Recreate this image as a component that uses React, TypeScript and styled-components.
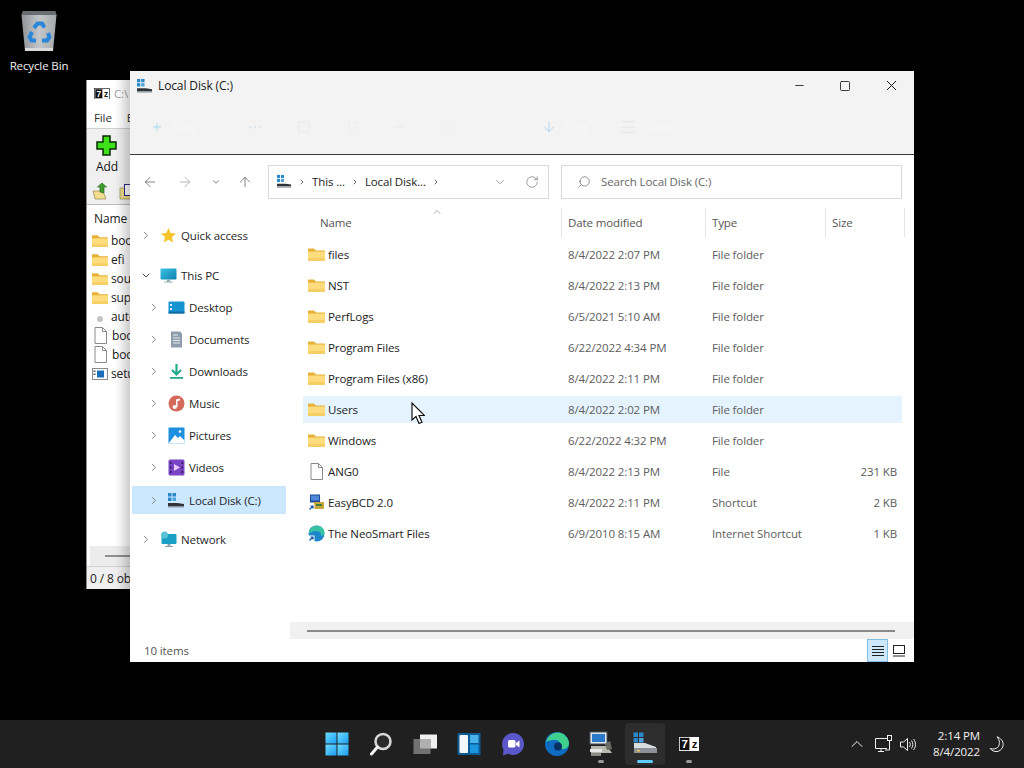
import React from 'react'
import styled, { createGlobalStyle } from 'styled-components'
import {
  AlignJustify,
  ArrowDown,
  ArrowLeft,
  ArrowRight,
  ArrowUp,
  ChevronDown,
  ChevronRight,
  ChevronUp,
  Minus,
  MoreHorizontal,
  Plus,
  RotateCw,
  Search,
  Square,
  X,
} from 'lucide-react'

const GlobalStyle = createGlobalStyle`
  html, body {
    margin: 0;
    padding: 0;
    background: #000;
    overflow: hidden;
  }
  * {
    box-sizing: border-box;
  }
`

const Screen = styled.div`
  width: 1024px;
  height: 768px;
  display: flex;
  flex-direction: column;
  font-family: 'Open Sans', 'Noto Sans', sans-serif;
  font-size: 11.5px;
  letter-spacing: -0.12px;
  color: #1b1b1b;
  overflow: hidden;
`

const Desktop = styled.div`
  position: relative;
  flex: 1;
  background: #000;
`

const RecycleBin = styled.div`
  position: absolute;
  left: 0;
  top: 9px;
  width: 78px;
  display: flex;
  flex-direction: column;
  align-items: center;
  gap: 5px;
  color: #f2f2f2;
  line-height: 15px;
`

/* 7-Zip window, mostly hidden behind explorer */
const ZipWindow = styled.div`
  position: absolute;
  left: 86px;
  top: 80px;
  width: 300px;
  height: 509px;
  display: flex;
  flex-direction: column;
  background: #fff;
  border-left: 1px solid #8a8a8a;
  overflow: hidden;
`

const ZipTitle = styled.div`
  height: 27px;
  display: flex;
  align-items: center;
  gap: 4px;
  padding-left: 7px;
  color: #a0a0a0;
`

const ZipMenu = styled.div`
  height: 22px;
  display: flex;
  align-items: center;
  gap: 15px;
  padding-left: 7px;
  color: #333;
  border-bottom: 1px solid #cfcfcf;
`

const ZipToolbar = styled.div`
  height: 50px;
  display: flex;
  flex-direction: column;
  align-items: flex-start;
  gap: 3px;
  padding: 6px 0 0 9px;
  background: #f0f0f0;
  color: #111;
  font-size: 12px;
  line-height: 15px;
`

const ZipPathBar = styled.div`
  height: 26px;
  display: flex;
  align-items: center;
  gap: 9px;
  padding-left: 5px;
  background: #f0f0f0;
  border-bottom: 1px solid #bdbdbd;
`

const ZipList = styled.div`
  flex: 1;
  display: flex;
  flex-direction: column;
  padding-left: 3px;
`

const ZipHeader = styled.div`
  height: 26px;
  padding: 5px 0 0 4px;
  color: #222;
  font-size: 12px;
`

const ZipRow = styled.div`
  height: 19px;
  display: flex;
  align-items: center;
  gap: 3px;
  padding-left: 2px;
  font-size: 12px;
  color: #222;
`

const ZipScroll = styled.div`
  height: 20px;
  margin-top: auto;
  display: flex;
  align-items: center;
  padding-left: 15px;
  background: #ececec;

  &::after {
    content: '';
    width: 100px;
    height: 2px;
    background: #8f8f8f;
  }
`

const ZipStatus = styled.div`
  height: 23px;
  display: flex;
  align-items: center;
  padding-left: 3px;
  background: #f0f0f0;
  border-top: 1px solid #d0d0d0;
  color: #222;
  font-size: 12px;
`

/* Explorer window */
const ExplorerWindow = styled.div`
  position: absolute;
  left: 130px;
  top: 71px;
  width: 784px;
  height: 591px;
  display: flex;
  flex-direction: column;
  background: #fff;
  box-shadow: -6px 0 10px rgba(0, 0, 0, 0.22);
`

const TitleBar = styled.div`
  height: 29px;
  display: flex;
  align-items: center;
  padding-left: 7px;
  gap: 5px;
  background: #f3f3f3;
  font-size: 12px;
  color: #1a1a1a;
`

const WindowButtons = styled.div`
  margin-left: auto;
  display: flex;
  align-items: center;
  color: #111;
`

const WindowButton = styled.div`
  width: 46px;
  height: 29px;
  display: flex;
  align-items: center;
  justify-content: center;
`

const CommandBar = styled.div`
  height: 55px;
  display: flex;
  align-items: center;
  padding: 0 0 0 21px;
  background: #f3f3f3;
  border-bottom: 1px solid #3a3a3a;
`

const CommandGroup = styled.div<{ $width: number }>`
  width: ${p => p.$width}px;
  display: flex;
  align-items: center;
  gap: 8px;
  color: #e4e4e4;
  font-size: 12px;
`

const CommandLabel = styled.span`
  color: #f8f8f8;
`

const NavRow = styled.div`
  height: 53px;
  display: flex;
  align-items: center;
  padding: 0 12px 0 10px;
  flex-shrink: 0;
`

const NavButton = styled.div<{ $dim?: boolean; $width?: number }>`
  width: ${p => p.$width ?? 35}px;
  display: flex;
  justify-content: center;
  color: ${p => (p.$dim ? '#a3a3a3' : '#666')};
`

const AddressBar = styled.div`
  width: 281px;
  height: 34px;
  display: flex;
  align-items: center;
  padding: 0 9px 0 8px;
  border: 1px solid #d9d9d9;
  color: #222;
  white-space: nowrap;
`

const Crumb = styled.span`
  margin: 0 6px;
`

const AddressEnd = styled.div`
  margin-left: auto;
  display: flex;
  align-items: center;
  gap: 18px;
  color: #777;
`

const SearchBox = styled.div`
  width: 341px;
  height: 34px;
  margin-left: 12px;
  display: flex;
  align-items: center;
  gap: 10px;
  padding-left: 15px;
  border: 1px solid #d9d9d9;
  color: #666;
`

const MirroredSearch = styled(Search)`
  transform: scaleX(-1);
`

const Body = styled.div`
  flex: 1;
  min-height: 0;
  display: flex;
`

const Sidebar = styled.nav`
  width: 160px;
  flex-shrink: 0;
  padding: 11px 0 0 2px;
  display: flex;
  flex-direction: column;
`

const TreeItem = styled.div<{ $depth: number; $active?: boolean; $gap?: number }>`
  width: 154px;
  height: ${p => (p.$active ? 28 : 32)}px;
  margin-top: ${p => p.$gap ?? 0}px;
  margin-bottom: ${p => (p.$active ? 2 : 0)}px;
  display: flex;
  align-items: center;
  padding-left: ${p => (p.$depth ? 16 : 8)}px;
  background: ${p => (p.$active ? '#cce8ff' : 'transparent')};
  border-radius: 1px;
  color: #1f1f1f;
  white-space: nowrap;
`

const TreeChevron = styled.span`
  width: 12px;
  display: flex;
  justify-content: center;
  color: #777;
  margin-right: 8px;
`

const TreeIcon = styled.span`
  width: 17px;
  height: 17px;
  display: flex;
  align-items: center;
  justify-content: center;
  margin-right: 4px;
`

const Main = styled.main`
  flex: 1;
  min-width: 0;
  display: flex;
  flex-direction: column;
  position: relative;
`

const SortArrow = styled.span`
  position: absolute;
  left: 141px;
  top: -2px;
  display: flex;
  color: #777;
`

const ColumnHeader = styled.div`
  height: 29px;
  flex-shrink: 0;
  margin: 0 9px 0 13px;
  display: grid;
  grid-template-columns: 259px 144px 120px 79px;
  align-items: stretch;
`

const HeaderCell = styled.div<{ $first?: boolean }>`
  display: flex;
  align-items: center;
  padding-left: ${p => (p.$first ? 17 : 6)}px;
  border-right: 1px solid #e5e5e5;
  color: #555;
`

const Rows = styled.div`
  flex: 1;
  padding: 4px 12px 0 13px;
  display: flex;
  flex-direction: column;
  gap: 4px;
`

const FileRow = styled.div<{ $hover?: boolean }>`
  height: 27px;
  flex-shrink: 0;
  display: grid;
  grid-template-columns: 259px 144px 120px 76px;
  align-items: center;
  background: ${p => (p.$hover ? '#e5f3ff' : 'transparent')};
`

const NameCell = styled.div`
  display: flex;
  align-items: center;
  gap: 3px;
  padding-left: 5px;
  color: #1b1b1b;
`

const FileIcon = styled.span`
  width: 17px;
  height: 17px;
  display: flex;
  align-items: center;
  justify-content: center;
`

const MetaCell = styled.div<{ $right?: boolean }>`
  padding: 0 5px 0 6px;
  color: #5d5d5d;
  text-align: ${p => (p.$right ? 'right' : 'left')};
`

const HScroll = styled.div`
  height: 17px;
  flex-shrink: 0;
  display: flex;
  align-items: center;
  padding: 0 19px 0 17px;
  background: #f1f1f1;

  &::after {
    content: '';
    flex: 1;
    height: 2px;
    background: #8a8a8a;
  }
`

const StatusBar = styled.div`
  height: 23px;
  flex-shrink: 0;
  display: flex;
  align-items: center;
  justify-content: space-between;
  padding: 0 5px 0 14px;
  color: #555;
`

const ViewButtons = styled.div`
  display: flex;
  align-items: center;
`

const ViewButton = styled.div<{ $active?: boolean }>`
  width: 21px;
  height: 23px;
  display: flex;
  align-items: center;
  justify-content: center;
  border: 1px solid ${p => (p.$active ? '#7fbde6' : 'transparent')};
  background: ${p => (p.$active ? '#cde8fb' : 'transparent')};
`

const Cursor = styled.svg`
  position: absolute;
  left: 411px;
  top: 402px;
`

/* Taskbar */
const Taskbar = styled.footer`
  height: 48px;
  flex-shrink: 0;
  display: grid;
  grid-template-columns: 1fr auto 1fr;
  background: #202020;
  padding-left: 2px;
`

const TaskIcons = styled.div`
  grid-column: 2;
  display: flex;
  align-items: stretch;
`

const TaskButton = styled.div<{ $active?: boolean; $mark?: 'dot' | 'bar' }>`
  position: relative;
  width: 44px;
  display: flex;
  align-items: center;
  justify-content: center;

  &::before {
    content: '';
    position: absolute;
    left: 2px;
    right: 2px;
    top: 3px;
    bottom: 3px;
    border-radius: 4px;
    background: ${p => (p.$active ? '#2d2d2d' : 'transparent')};
  }

  &::after {
    content: '';
    position: absolute;
    bottom: 5px;
    left: 50%;
    transform: translateX(-50%);
    width: ${p => (p.$mark === 'bar' ? 16 : p.$mark === 'dot' ? 6 : 0)}px;
    height: 3px;
    border-radius: 2px;
    background: ${p => (p.$mark === 'bar' ? '#60cdff' : '#9a9a9a')};
  }

  & > svg {
    position: relative;
    z-index: 1;
  }
`

const Tray = styled.div`
  grid-column: 3;
  display: flex;
  align-items: center;
  justify-content: flex-end;
  color: #f0f0f0;
`

const TrayIcon = styled.span<{ $width?: number }>`
  width: ${p => p.$width ?? 25}px;
  display: flex;
  justify-content: center;
`

const Clock = styled.div`
  margin-left: 12px;
  text-align: right;
  font-size: 11.5px;
  line-height: 16px;
`

const MoonSlot = styled.span`
  width: 44px;
  padding-left: 9px;
  display: flex;
  justify-content: flex-start;
`

const FolderIcon = ({ size = 17 }: { size?: number }) => (
  <svg width={size} height={size} viewBox="0 0 17 17">
    <path d="M0 3.5C0 3 .4 2.5 1 2.5h5l2 2h8c.6 0 1 .4 1 1V8H0z" fill="#e6b134" />
    <rect x="0" y="5.5" width="17" height="9.5" rx="1" fill="#fcdc7c" />
    <rect x="0" y="12" width="17" height="3" rx="1" fill="#f5cf63" />
  </svg>
)

const UpFolderIcon = () => (
  <svg width="18" height="18" viewBox="0 0 18 18">
    <path d="M1 8h10l3 8H3z" fill="#f0dc8c" stroke="#9c9258" strokeWidth=".8" />
    <path d="M8 9V4H5.500L10 0l4.500 4H12v6z" fill="#3e9e2e" stroke="#1d5c14" strokeWidth=".6" />
  </svg>
)

const CopyFolderIcon = () => (
  <svg width="18" height="18" viewBox="0 0 18 18">
    <path d="M1 5h11v11H1z" fill="#f0dc8c" stroke="#9c9258" strokeWidth=".8" />
    <rect x="5.500" y="1.500" width="12" height="11" fill="#fff" stroke="#2a2a80" />
  </svg>
)

const DocIcon = () => (
  <svg width="17" height="17" viewBox="0 0 17 17">
    <path d="M3 .5h7.500l4 4v12H3z" fill="#fff" stroke="#8a8a8a" />
    <path d="M10.500.5v4h4" fill="none" stroke="#8a8a8a" />
  </svg>
)

const DriveIcon = ({ size = 17 }: { size?: number }) => (
  <svg width={size} height={size} viewBox="0 0 17 17">
    <rect x="0" y="1" width="3.500" height="3.500" fill="#2a87c9" />
    <rect x="4.500" y="1" width="3.500" height="3.500" fill="#2a87c9" />
    <rect x="0" y="5.500" width="3.500" height="3.500" fill="#2a87c9" />
    <rect x="4.500" y="5.500" width="3.500" height="3.500" fill="#4aa3dd" />
    <path d="M0 11h9.500l6.500 1v2H0z" fill="#2f3338" />
    <rect x="0" y="14" width="16" height="1.500" fill="#8d97a0" />
  </svg>
)

const MonitorIcon = () => (
  <svg width="17" height="17" viewBox="0 0 17 17">
    <defs>
      <linearGradient id="screenGrad" x1="0" y1="0" x2="1" y2="1">
        <stop offset="0" stopColor="#3cc3e3" />
        <stop offset="1" stopColor="#0c7fb0" />
      </linearGradient>
    </defs>
    <rect x=".5" y="1.500" width="16" height="11" rx="1" fill="url(#screenGrad)" />
    <rect x="7" y="12.500" width="3" height="2" fill="#8fa3ad" />
    <rect x="4.500" y="14.500" width="8" height="1" fill="#8fa3ad" />
  </svg>
)

const StarIcon = () => (
  <svg width="17" height="17" viewBox="0 0 17 17">
    <path
      d="M8.500 1l2.200 4.900 5.300.6-4 3.600 1.100 5.300-4.600-2.700-4.600 2.700 1.100-5.300-4-3.600 5.300-.6z"
      fill="#f7c52b"
    />
  </svg>
)

const DesktopFolderIcon = () => (
  <svg width="17" height="17" viewBox="0 0 17 17">
    <rect x=".5" y="2.500" width="16" height="12" rx="1" fill="#1793d1" />
    <rect x="2" y="5" width="2" height="2" fill="#d7f0ff" />
    <rect x="2" y="9" width="2" height="2" fill="#d7f0ff" />
    <rect x=".5" y="12.500" width="16" height="2" fill="#0e6ea3" />
  </svg>
)

const DocumentsIcon = () => (
  <svg width="17" height="17" viewBox="0 0 17 17">
    <path d="M3 .5h9l2 2v14H3z" fill="#8e9cae" />
    <rect x="5" y="3.500" width="5" height="1" fill="#e7ebef" />
    <rect x="5" y="6.500" width="7" height="1" fill="#e7ebef" />
    <rect x="5" y="9" width="7" height="1" fill="#e7ebef" />
    <rect x="5" y="11.500" width="7" height="1" fill="#e7ebef" />
  </svg>
)

const DownloadsIcon = () => (
  <svg width="17" height="17" viewBox="0 0 17 17">
    <path d="M8.500 1v10M4 7l4.500 4.500L13 7" fill="none" stroke="#23a98c" strokeWidth="2.200" />
    <rect x="2" y="14" width="13" height="1.800" fill="#23a98c" />
  </svg>
)

const MusicIcon = () => (
  <svg width="17" height="17" viewBox="0 0 17 17">
    <circle cx="8.500" cy="8.500" r="8" fill="#d46a5c" />
    <path d="M8 12V4.500l4-1v2l-2.500.6V12" fill="#fff" />
    <circle cx="6.700" cy="12" r="2.100" fill="#fff" />
  </svg>
)

const PicturesIcon = () => (
  <svg width="17" height="17" viewBox="0 0 17 17">
    <rect x=".5" y=".5" width="16" height="16" fill="#1c8fe0" />
    <path d="M.5 16.500l6.500-8.500 3 3 2-2 4.500 4.500v3z" fill="#fff" />
    <circle cx="12" cy="4.500" r="1.300" fill="#fff" />
  </svg>
)

const VideosIcon = () => (
  <svg width="17" height="17" viewBox="0 0 17 17">
    <rect x=".5" y=".5" width="16" height="16" rx="1.500" fill="#7a45c4" />
    <rect x="2" y="3" width="1.500" height="2" fill="#2d1b55" />
    <rect x="2" y="7.500" width="1.500" height="2" fill="#2d1b55" />
    <rect x="2" y="12" width="1.500" height="2" fill="#2d1b55" />
    <rect x="13.500" y="3" width="1.500" height="2" fill="#2d1b55" />
    <rect x="13.500" y="7.500" width="1.500" height="2" fill="#2d1b55" />
    <rect x="13.500" y="12" width="1.500" height="2" fill="#2d1b55" />
    <path d="M6 5l6 3.500L6 12z" fill="#e9c9ff" />
  </svg>
)

const NetworkIcon = () => (
  <svg width="17" height="17" viewBox="0 0 17 17">
    <rect x="1.500" y="3" width="15" height="10" rx="1" fill="#1a9fc4" />
    <rect x="7.500" y="13" width="3" height="2" fill="#8fa3ad" />
    <rect x="5" y="15" width="8" height="1" fill="#8fa3ad" />
    <circle cx="4.500" cy="4" r="3.500" fill="#5cc2d8" />
  </svg>
)

const ShortcutBadge = () => (
  <>
    <rect x="0" y="10.500" width="6.500" height="6.500" fill="#fff" />
    <path d="M1.500 15.500l3-3M2.500 12H5v2.500" fill="none" stroke="#1558a8" strokeWidth="1.200" />
  </>
)

const EasyBcdIcon = () => (
  <svg width="17" height="17" viewBox="0 0 17 17">
    <rect x="2" y=".5" width="10" height="8" fill="#20499c" />
    <rect x="3" y="1.500" width="8" height="5" fill="#4e8ad8" />
    <rect x="6" y="8" width="10" height="7" fill="#c9a53c" />
    <rect x="8" y="10" width="6" height="2" fill="#3f7f3a" />
    <ShortcutBadge />
  </svg>
)

const EdgeShortcutIcon = () => (
  <svg width="17" height="17" viewBox="0 0 17 17">
    <circle cx="8.500" cy="8.500" r="8" fill="#1c87c9" />
    <path d="M1 7c1-5 6-7 10-6s5.500 4.500 5.500 7c0 2-2 3-4 2.500C14 9 12 6 8.500 6 5 6 2 7.500 1 9z" fill="#38c2a4" />
    <ShortcutBadge />
  </svg>
)

const RecycleBinIcon = () => (
  <svg width="38" height="44" viewBox="0 0 38 44">
    <defs>
      <linearGradient id="binGrad" x1="0" y1="0" x2="1" y2="0">
        <stop offset="0" stopColor="#8e9296" />
        <stop offset=".5" stopColor="#c4c7ca" />
        <stop offset="1" stopColor="#a5a8ab" />
      </linearGradient>
    </defs>
    <path d="M3 2h32l1.500 4L33 42H5L1.500 6z" fill="url(#binGrad)" />
    <path d="M3 2h32l1.500 4h-35z" fill="#6a6d70" />
    <rect x="5" y="39" width="28" height="3" fill="#d8dadb" />
    <g fill="none" stroke="#2a86d8" strokeWidth="4">
      <path d="M14 19l3.500-4.500h4.500l2.500 4" />
      <path d="M28 24l1.500 4-2.500 3.500h-5" />
      <path d="M16 31.500h-4.500l-2-3.500 2.500-5" />
    </g>
  </svg>
)

const ZipLogo = ({ size = 16 }: { size?: number }) => (
  <svg width={size} height={size * 0.72} viewBox="0 0 25 18">
    <rect x=".5" y=".5" width="24" height="17" fill="#fff" stroke="#111" />
    <rect x="2" y="2" width="11" height="14" fill="#111" />
    <text x="7.500" y="13.500" fontSize="13" fontWeight="700" fill="#fff" textAnchor="middle" fontFamily="Liberation Sans, sans-serif">
      7
    </text>
    <text x="18.700" y="13.500" fontSize="13" fontWeight="700" fill="#111" textAnchor="middle" fontFamily="Liberation Sans, sans-serif">
      z
    </text>
  </svg>
)

const AddIcon = () => (
  <svg width="21" height="21" viewBox="0 0 21 21">
    <path d="M7 1h7v6h6v7h-6v6H7v-6H1V7h6z" fill="#3ee01a" stroke="#0a2a05" strokeWidth="1.500" />
  </svg>
)

const SmallZipFile = () => (
  <svg width="16" height="12" viewBox="0 0 16 12">
    <rect x=".5" y=".5" width="15" height="11" fill="#fff" stroke="#8a8a8a" />
    <rect x="5" y="2.500" width="7" height="7" fill="#1c6fb8" />
    <rect x="1.500" y="2.500" width="2" height="1.500" fill="#5a5a5a" />
    <rect x="1.500" y="5.500" width="2" height="1.500" fill="#5a5a5a" />
  </svg>
)

const StartIcon = () => (
  <svg width="24" height="24" viewBox="0 0 24 24">
    <defs>
      <linearGradient id="startGrad" x1="0" y1="0" x2="1" y2="1">
        <stop offset="0" stopColor="#6fdcff" />
        <stop offset="1" stopColor="#1a9ef0" />
      </linearGradient>
    </defs>
    <rect x=".5" y=".5" width="11" height="11" fill="url(#startGrad)" />
    <rect x="12.500" y=".5" width="11" height="11" fill="url(#startGrad)" />
    <rect x=".5" y="12.500" width="11" height="11" fill="url(#startGrad)" />
    <rect x="12.500" y="12.500" width="11" height="11" fill="url(#startGrad)" />
  </svg>
)

const SearchTaskIcon = () => (
  <svg width="24" height="24" viewBox="0 0 24 24">
    <circle cx="14" cy="9.500" r="7.500" fill="#2b2b2b" stroke="#d8d8d8" strokeWidth="2.500" />
    <path d="M8.500 15l-6 7" stroke="#f2f2f2" strokeWidth="3" strokeLinecap="round" />
  </svg>
)

const TaskViewIcon = () => (
  <svg width="24" height="24" viewBox="0 0 24 24">
    <rect x="7" y="2.500" width="17" height="14" fill="#f0f0f0" />
    <rect x=".5" y="7" width="17" height="15" fill="#7a7a7a" opacity=".92" />
    <rect x="7" y="7" width="10.500" height="9.500" fill="#b0b0b0" />
  </svg>
)

const WidgetsIcon = () => (
  <svg width="24" height="24" viewBox="0 0 24 24">
    <rect x=".5" y="1" width="23" height="22" fill="#0d5a94" />
    <rect x="2.500" y="3" width="8.500" height="18" rx="1" fill="#f4f8fb" />
    <rect x="13" y="3" width="8.500" height="8" fill="#49b2ea" />
    <rect x="13" y="12.500" width="8.500" height="8.500" fill="#1b97e0" />
  </svg>
)

const ChatIcon = () => (
  <svg width="24" height="24" viewBox="0 0 24 24">
    <path d="M12 1a11 11 0 1 1-5 20.800L2 23.500l.5-6A11 11 0 0 1 12 1z" fill="#5b57c9" />
    <rect x="7" y="8" width="7.500" height="7.500" rx="1.500" fill="#fff" />
    <path d="M15 11l3.500-2.500v7L15 13z" fill="#fff" />
  </svg>
)

const EdgeIcon = () => (
  <svg width="24" height="24" viewBox="0 0 24 24">
    <circle cx="12" cy="12" r="12" fill="#0f6cc0" />
    <path d="M1 10C3 3 9 0 14 .5s10 5.500 10 11c0 4-3.500 5.500-6 5.500-3 0-3.500-1.500-3-3 1-3-1-6-4.500-6S2.500 8.500 1 10z" fill="#3fd08f" />
    <circle cx="13" cy="14.500" r="4" fill="#082f60" />
  </svg>
)

const PcManagerIcon = () => (
  <svg width="26" height="26" viewBox="0 0 26 26">
    <rect x="2" y="1" width="17" height="12" fill="#dfe5ea" stroke="#4a5560" />
    <rect x="4" y="3" width="13" height="8" fill="#2b78c8" />
    <path d="M3 15h16l5 7H3z" fill="#b8b8b0" />
    <rect x="2" y="18" width="12" height="3" fill="#e8e8e8" />
    <rect x="3" y="22" width="10" height="3" fill="#8b8b85" />
    <path d="M17 13l5-3 2 8-5 1z" fill="#6c6c66" />
  </svg>
)

const TaskDriveIcon = () => (
  <svg width="24" height="24" viewBox="0 0 24 24">
    <rect x=".5" y=".5" width="4.500" height="4.500" fill="#2a87c9" />
    <rect x="6" y=".5" width="4.500" height="4.500" fill="#2a87c9" />
    <rect x=".5" y="6" width="4.500" height="4.500" fill="#2a87c9" />
    <rect x="6" y="6" width="4.500" height="4.500" fill="#4aa3dd" />
    <path d="M1 11h11l11 4v2H1z" fill="#d8dde0" />
    <rect x="1" y="16" width="23" height="5" fill="#8c9297" />
    <rect x="4" y="18" width="3" height="1.500" fill="#e6c44a" />
  </svg>
)

const TrayNetworkIcon = () => (
  <svg width="18" height="18" viewBox="0 0 18 18" fill="none" stroke="#f0f0f0" strokeWidth="1">
    <path d="M12 3.500H.5v10H12" />
    <path d="M6 13.500V16M3 16.500h6" />
    <rect x="12.500" y=".5" width="4" height="5" />
    <path d="M14.500 5.500V15H10" />
  </svg>
)

const VolumeIcon = () => (
  <svg width="17" height="15" viewBox="0 0 17 15" fill="none" stroke="#f0f0f0" strokeWidth="1">
    <path d="M.5 5v5h3l4 3.500v-12l-4 3.500z" />
    <path d="M9.500 5c1 1.500 1 3.500 0 5M11.500 3.500c1.800 2.500 1.800 5.500 0 8M13.500 2c2.700 3.500 2.700 7.500 0 11" />
  </svg>
)

const MoonIcon = () => (
  <svg width="15" height="17" viewBox="0 0 15 17" fill="none" stroke="#f0f0f0" strokeWidth="1">
    <path d="M8 .8c3 3.500 3.200 8 .7 10.600-2 1.800-5 2-7.500 1.100 1.800 2.500 5 3.700 8 2.800 3-1 5-3.700 5-6.800C14.200 5 11.500 2 8 .8z" />
  </svg>
)

type TreeNode = {
  label: string
  depth: number
  icon: React.ReactNode
  open?: boolean
  active?: boolean
  gap?: number
}

const TREE: TreeNode[] = [
  { label: 'Quick access', depth: 0, icon: <StarIcon /> },
  { label: 'This PC', depth: 0, icon: <MonitorIcon />, open: true, gap: 8 },
  { label: 'Desktop', depth: 1, icon: <DesktopFolderIcon /> },
  { label: 'Documents', depth: 1, icon: <DocumentsIcon /> },
  { label: 'Downloads', depth: 1, icon: <DownloadsIcon /> },
  { label: 'Music', depth: 1, icon: <MusicIcon /> },
  { label: 'Pictures', depth: 1, icon: <PicturesIcon /> },
  { label: 'Videos', depth: 1, icon: <VideosIcon /> },
  { label: 'Local Disk (C:)', depth: 1, icon: <DriveIcon />, active: true, gap: 3 },
  { label: 'Network', depth: 0, icon: <NetworkIcon />, gap: 7 },
]

type FileEntry = {
  name: string
  date: string
  type: string
  size?: string
  icon: React.ReactNode
  hover?: boolean
}

const FILES: FileEntry[] = [
  { name: 'files', date: '8/4/2022 2:07 PM', type: 'File folder', icon: <FolderIcon /> },
  { name: 'NST', date: '8/4/2022 2:13 PM', type: 'File folder', icon: <FolderIcon /> },
  { name: 'PerfLogs', date: '6/5/2021 5:10 AM', type: 'File folder', icon: <FolderIcon /> },
  { name: 'Program Files', date: '6/22/2022 4:34 PM', type: 'File folder', icon: <FolderIcon /> },
  { name: 'Program Files (x86)', date: '8/4/2022 2:11 PM', type: 'File folder', icon: <FolderIcon /> },
  { name: 'Users', date: '8/4/2022 2:02 PM', type: 'File folder', icon: <FolderIcon />, hover: true },
  { name: 'Windows', date: '6/22/2022 4:32 PM', type: 'File folder', icon: <FolderIcon /> },
  { name: 'ANG0', date: '8/4/2022 2:13 PM', type: 'File', size: '231 KB', icon: <DocIcon /> },
  { name: 'EasyBCD 2.0', date: '8/4/2022 2:11 PM', type: 'Shortcut', size: '2 KB', icon: <EasyBcdIcon /> },
  { name: 'The NeoSmart Files', date: '6/9/2010 8:15 AM', type: 'Internet Shortcut', size: '1 KB', icon: <EdgeShortcutIcon /> },
]

const ZIP_ROWS: { name: string; kind: 'folder' | 'doc' | 'gear' | 'exe' }[] = [
  { name: 'boot', kind: 'folder' },
  { name: 'efi', kind: 'folder' },
  { name: 'sources', kind: 'folder' },
  { name: 'support', kind: 'folder' },
  { name: 'autorun.inf', kind: 'gear' },
  { name: 'bootmgr', kind: 'doc' },
  { name: 'bootmgr.efi', kind: 'doc' },
  { name: 'setup.exe', kind: 'exe' },
]

const ZipRowIcon = ({ kind }: { kind: string }) => {
  if (kind === 'folder') return <FolderIcon size={16} />
  if (kind === 'doc') return <DocIcon />
  if (kind === 'exe') return <SmallZipFile />
  return (
    <svg width="16" height="16" viewBox="0 0 16 16">
      <circle cx="8" cy="10" r="3" fill="#c4c4c4" />
    </svg>
  )
}

export default function App() {
  return (
    <Screen>
      <GlobalStyle />
      <Desktop>
        <RecycleBin>
          <RecycleBinIcon />
          <span>Recycle Bin</span>
        </RecycleBin>

        <ZipWindow>
          <ZipTitle>
            <ZipLogo />
            <span>C:\</span>
          </ZipTitle>
          <ZipMenu>
            <span>File</span>
            <span>Edit</span>
          </ZipMenu>
          <ZipToolbar>
            <AddIcon />
            <span>Add</span>
          </ZipToolbar>
          <ZipPathBar>
            <UpFolderIcon />
            <CopyFolderIcon />
          </ZipPathBar>
          <ZipList>
            <ZipHeader>Name</ZipHeader>
            {ZIP_ROWS.map(row => (
              <ZipRow key={row.name}>
                <ZipRowIcon kind={row.kind} />
                <span>{row.name}</span>
              </ZipRow>
            ))}
            <ZipScroll />
          </ZipList>
          <ZipStatus>0 / 8 object(s) selected</ZipStatus>
        </ZipWindow>

        <ExplorerWindow>
          <TitleBar>
            <DriveIcon size={16} />
            <span>Local Disk (C:)</span>
            <WindowButtons>
              <WindowButton>
                <Minus size={13} strokeWidth={1.5} />
              </WindowButton>
              <WindowButton>
                <Square size={12} strokeWidth={1.6} />
              </WindowButton>
              <WindowButton>
                <X size={17} strokeWidth={1.4} />
              </WindowButton>
            </WindowButtons>
          </TitleBar>

          <CommandBar>
            <CommandGroup $width={96}>
              <Plus size={12} color="#a9d8ee" />
              <CommandLabel>New</CommandLabel>
            </CommandGroup>
            <CommandGroup $width={50}>
              <MoreHorizontal size={16} color="#dfe7ee" />
            </CommandGroup>
            <CommandGroup $width={50}>
              <Square size={14} color="#e2e6e9" strokeWidth={1} />
            </CommandGroup>
            <CommandGroup $width={45}>
              <Square size={12} color="#e2e6e9" strokeWidth={1} />
            </CommandGroup>
            <CommandGroup $width={49}>
              <Minus size={14} color="#e2e6e9" strokeWidth={1} />
            </CommandGroup>
            <CommandGroup $width={100}>
              <RotateCw size={12} color="#e6eaed" strokeWidth={1} />
            </CommandGroup>
            <CommandGroup $width={78}>
              <ArrowDown size={16} color="#a9cfe8" strokeWidth={1.3} />
              <CommandLabel>Sort</CommandLabel>
            </CommandGroup>
            <CommandGroup $width={90}>
              <AlignJustify size={18} color="#e0e0e0" strokeWidth={1} />
              <CommandLabel>View</CommandLabel>
            </CommandGroup>
          </CommandBar>

          <NavRow>
            <NavButton $width={20}>
              <ArrowLeft size={16} strokeWidth={1.2} />
            </NavButton>
            <NavButton $dim $width={50}>
              <ArrowRight size={16} strokeWidth={1.2} />
            </NavButton>
            <NavButton $width={12}>
              <ChevronDown size={10} />
            </NavButton>
            <NavButton $width={46}>
              <ArrowUp size={16} strokeWidth={1.2} />
            </NavButton>
            <AddressBar>
              <DriveIcon size={15} />
              <Crumb>
                <ChevronRight size={8} />
              </Crumb>
              <span>This ...</span>
              <Crumb>
                <ChevronRight size={8} />
              </Crumb>
              <span>Local Disk...</span>
              <Crumb>
                <ChevronRight size={8} />
              </Crumb>
              <AddressEnd>
                <ChevronDown size={14} strokeWidth={1.2} />
                <RotateCw size={14} strokeWidth={1.2} />
              </AddressEnd>
            </AddressBar>
            <SearchBox>
              <MirroredSearch size={14} strokeWidth={1.2} />
              <span>Search Local Disk (C:)</span>
            </SearchBox>
          </NavRow>

          <Body>
            <Sidebar>
              {TREE.map(node => (
                <TreeItem key={node.label} $depth={node.depth} $active={node.active} $gap={node.gap}>
                  <TreeChevron>
                    {node.open ? (
                      <ChevronDown size={13} strokeWidth={1.8} color="#333" />
                    ) : (
                      <ChevronRight size={13} strokeWidth={1.8} />
                    )}
                  </TreeChevron>
                  <TreeIcon>{node.icon}</TreeIcon>
                  <span>{node.label}</span>
                </TreeItem>
              ))}
            </Sidebar>

            <Main>
              <SortArrow>
                <ChevronUp size={12} strokeWidth={1.2} />
              </SortArrow>
              <ColumnHeader>
                <HeaderCell $first>Name</HeaderCell>
                <HeaderCell>Date modified</HeaderCell>
                <HeaderCell>Type</HeaderCell>
                <HeaderCell>Size</HeaderCell>
              </ColumnHeader>
              <Rows>
                {FILES.map(file => (
                  <FileRow key={file.name} $hover={file.hover}>
                    <NameCell>
                      <FileIcon>{file.icon}</FileIcon>
                      <span>{file.name}</span>
                    </NameCell>
                    <MetaCell>{file.date}</MetaCell>
                    <MetaCell>{file.type}</MetaCell>
                    <MetaCell $right>{file.size}</MetaCell>
                  </FileRow>
                ))}
              </Rows>
              <HScroll />
            </Main>
          </Body>

          <StatusBar>
            <span>10 items</span>
            <ViewButtons>
              <ViewButton $active>
                <svg width="14" height="12" viewBox="0 0 14 12" stroke="#222">
                  <path d="M1 1.500h12M1 4.500h12M1 7.500h12M1 10.500h12" />
                </svg>
              </ViewButton>
              <ViewButton>
                <svg width="14" height="13" viewBox="0 0 14 13" fill="none" stroke="#222">
                  <rect x="1.500" y="1.500" width="11" height="8" />
                  <path d="M1 12h12" />
                </svg>
              </ViewButton>
            </ViewButtons>
          </StatusBar>
        </ExplorerWindow>

        <Cursor width="14" height="24" viewBox="0 0 14 24">
          <path
            d="M1 1v17l4-3.500 3 7 3-1.300-3-6.700h5.500z"
            fill="#fff"
            stroke="#111"
            strokeWidth="1.200"
          />
        </Cursor>
      </Desktop>

      <Taskbar>
        <TaskIcons>
          <TaskButton>
            <StartIcon />
          </TaskButton>
          <TaskButton>
            <SearchTaskIcon />
          </TaskButton>
          <TaskButton>
            <TaskViewIcon />
          </TaskButton>
          <TaskButton>
            <WidgetsIcon />
          </TaskButton>
          <TaskButton>
            <ChatIcon />
          </TaskButton>
          <TaskButton>
            <EdgeIcon />
          </TaskButton>
          <TaskButton $mark="dot">
            <PcManagerIcon />
          </TaskButton>
          <TaskButton $active $mark="bar">
            <TaskDriveIcon />
          </TaskButton>
          <TaskButton $mark="dot">
            <ZipLogo size={22} />
          </TaskButton>
        </TaskIcons>
        <Tray>
          <TrayIcon $width={28}>
            <ChevronUp size={20} strokeWidth={1.2} />
          </TrayIcon>
          <TrayIcon>
            <TrayNetworkIcon />
          </TrayIcon>
          <TrayIcon>
            <VolumeIcon />
          </TrayIcon>
          <Clock>
            <div>2:14 PM</div>
            <div>8/4/2022</div>
          </Clock>
          <MoonSlot>
            <MoonIcon />
          </MoonSlot>
        </Tray>
      </Taskbar>
    </Screen>
  )
}
